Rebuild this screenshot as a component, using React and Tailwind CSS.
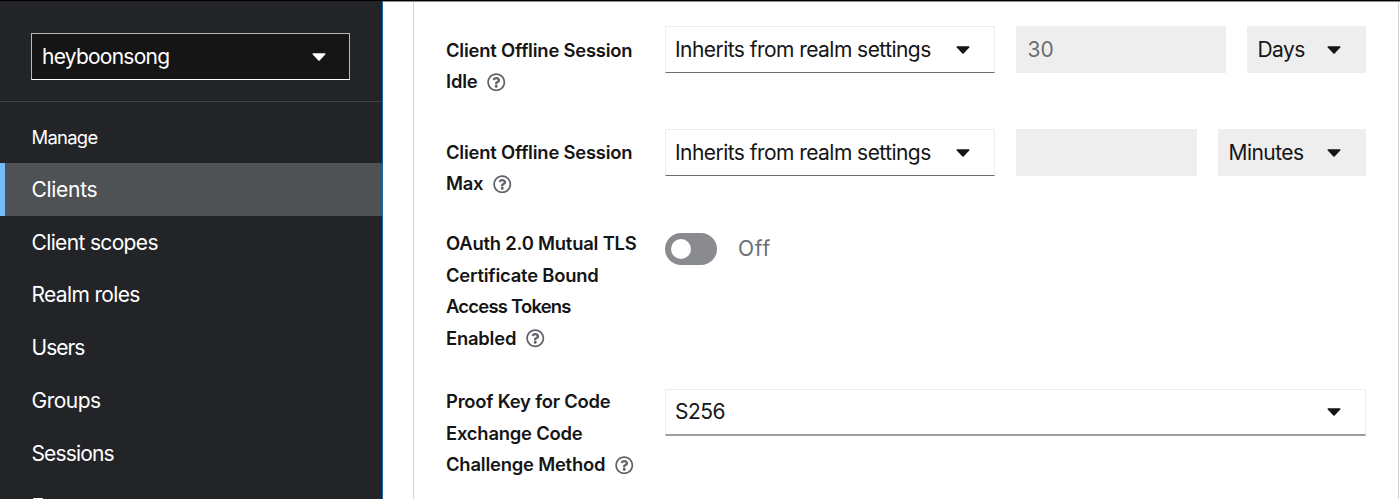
import clsx from 'clsx'
import { FaRegQuestionCircle } from 'react-icons/fa'

const navItems = [
    { label: 'Clients', tracking: 'tracking-[-0.3px]', active: true },
    { label: 'Client scopes', tracking: 'tracking-[-0.65px]' },
    { label: 'Realm roles', tracking: 'tracking-[-0.65px]' },
    { label: 'Users', tracking: 'tracking-[-1px]' },
    { label: 'Groups', tracking: 'tracking-[-0.5px]' },
    { label: 'Sessions', tracking: 'tracking-[-0.85px]' },
    { label: 'Events', tracking: 'tracking-[-0.6px]' },
]

function Caret({ className }) {
    return (
        <svg viewBox="0 0 14 8" className={clsx('h-2 w-3.5 shrink-0', className)} fill="currentColor">
            <path d="M1.2 0.3h11.6c.7 0 1 .8.5 1.3L7.6 7.4c-.3.3-.9.3-1.2 0L.7 1.6C.2 1.1.5.3 1.2.3z" />
        </svg>
    )
}

function Select({ value, disabled, className }) {
    return (
        <button
            className={clsx(
                'flex items-center justify-between text-[21px]',
                disabled
                    ? 'bg-[#eeeeee] pl-[11px] pr-[25px]'
                    : 'border border-[#ededed] bg-white pl-[9.5px] pr-6',
                className
            )}
        >
            <span className="whitespace-nowrap tracking-[-0.55px]">{value}</span>
            <Caret />
        </button>
    )
}

function Field({ lines, className, children }) {
    return (
        <div className={clsx('flex items-start', className)}>
            <div className="w-[218.5px] shrink-0 text-[18.4px] font-semibold leading-[31.6px]">
                {lines.map((line, i) => (
                    <div
                        key={line}
                        className={clsx(
                            'flex items-center whitespace-nowrap',
                            line === 'Access Tokens' ? 'tracking-[-0.75px]' : 'tracking-[-0.2px]'
                        )}
                    >
                        {line}
                        {i === lines.length - 1 && (
                            <FaRegQuestionCircle className="ml-2.5 size-[18.5px] text-[#5f6266]" />
                        )}
                    </div>
                ))}
            </div>
            {children}
        </div>
    )
}

function Sidebar() {
    return (
        <aside className="w-[383px] shrink-0 border-r border-[#1267a8] bg-[#222427] text-white">
            <div className="h-[101px] border-b border-[#404346] pl-[31px] pt-8">
                <button className="flex h-[47px] w-[319px] items-center justify-between border border-[#b8b8b8] border-b-white bg-[#151515] pl-2.5 pr-[23px] text-[21px]">
                    <span className="tracking-[-0.75px]">heyboonsong</span>
                    <Caret />
                </button>
            </div>
            <h2 className="h-[61px] pl-[31.5px] pt-5 text-[18.4px] leading-[31px] tracking-[-0.7px]">Manage</h2>
            <nav>
                {navItems.map((item) => (
                    <a
                        key={item.label}
                        className={clsx(
                            'flex h-[52.7px] items-center border-l-[5px] pl-[26.5px] pt-px text-[21px] last:pt-[3px]',
                            item.tracking,
                            item.active ? 'border-[#73bcf7] bg-[#4f5255]' : 'border-transparent'
                        )}
                    >
                        {item.label}
                    </a>
                ))}
            </nav>
        </aside>
    )
}

export default function App() {
    return (
        <div className="flex h-[499px] w-[1400px] overflow-hidden border-t border-black bg-white font-[Inter,'Liberation_Sans',sans-serif] text-[#151515]">
            <Sidebar />
            <div className="flex flex-1 border-t border-[#8c8c8c] pl-[30px] pr-px">
                <main className="flex-1 border-x border-[#d2d2d2] px-8 pt-6">
                    <Field className="h-[102.5px] [&>div:first-child]:pt-[8.5px]" lines={['Client Offline Session', 'Idle']}>
                        <Select value="Inherits from realm settings" className="h-[47px] w-[330px] border-b-[#6a6e73]" />
                        <input disabled value="30" className="ml-[21px] h-[47px] w-[210px] bg-[#eeeeee] pl-3 text-[21px] text-[#6a6e73]" />
                        <Select disabled value="Days" className="ml-[21px] h-[47px] w-[119.5px]" />
                    </Field>
                    <Field className="h-[99.5px] [&>div:first-child]:pt-2" lines={['Client Offline Session', 'Max']}>
                        <Select value="Inherits from realm settings" className="h-[47.5px] w-[330px] border-b-[#6a6e73] pt-px" />
                        <input disabled value="" className="ml-[21px] h-[47.5px] w-[181px] bg-[#eeeeee]" />
                        <Select disabled value="Minutes" className="ml-[21px] h-[47.5px] w-[148.5px] pt-px" />
                    </Field>
                    <Field className="h-[158px]" lines={['OAuth 2.0 Mutual TLS', 'Certificate Bound', 'Access Tokens', 'Enabled']}>
                        <div className="mt-[5px] flex h-8 items-center">
                            <span className="flex h-8 w-[52.5px] items-center rounded-full bg-[#8a8b8e] pl-1.5">
                                <span className="size-5 rounded-full bg-white" />
                            </span>
                            <span className="ml-[21px] text-[21px] tracking-[0.8px] text-[#6a6e73]">Off</span>
                        </div>
                    </Field>
                    <Field lines={['Proof Key for Code', 'Exchange Code', 'Challenge Method']}>
                        <Select value="S256" className="mt-[3px] h-[47px] w-[701.5px] border-b-2 border-b-[#9c9d9f]" />
                    </Field>
                </main>
            </div>
        </div>
    )
}
